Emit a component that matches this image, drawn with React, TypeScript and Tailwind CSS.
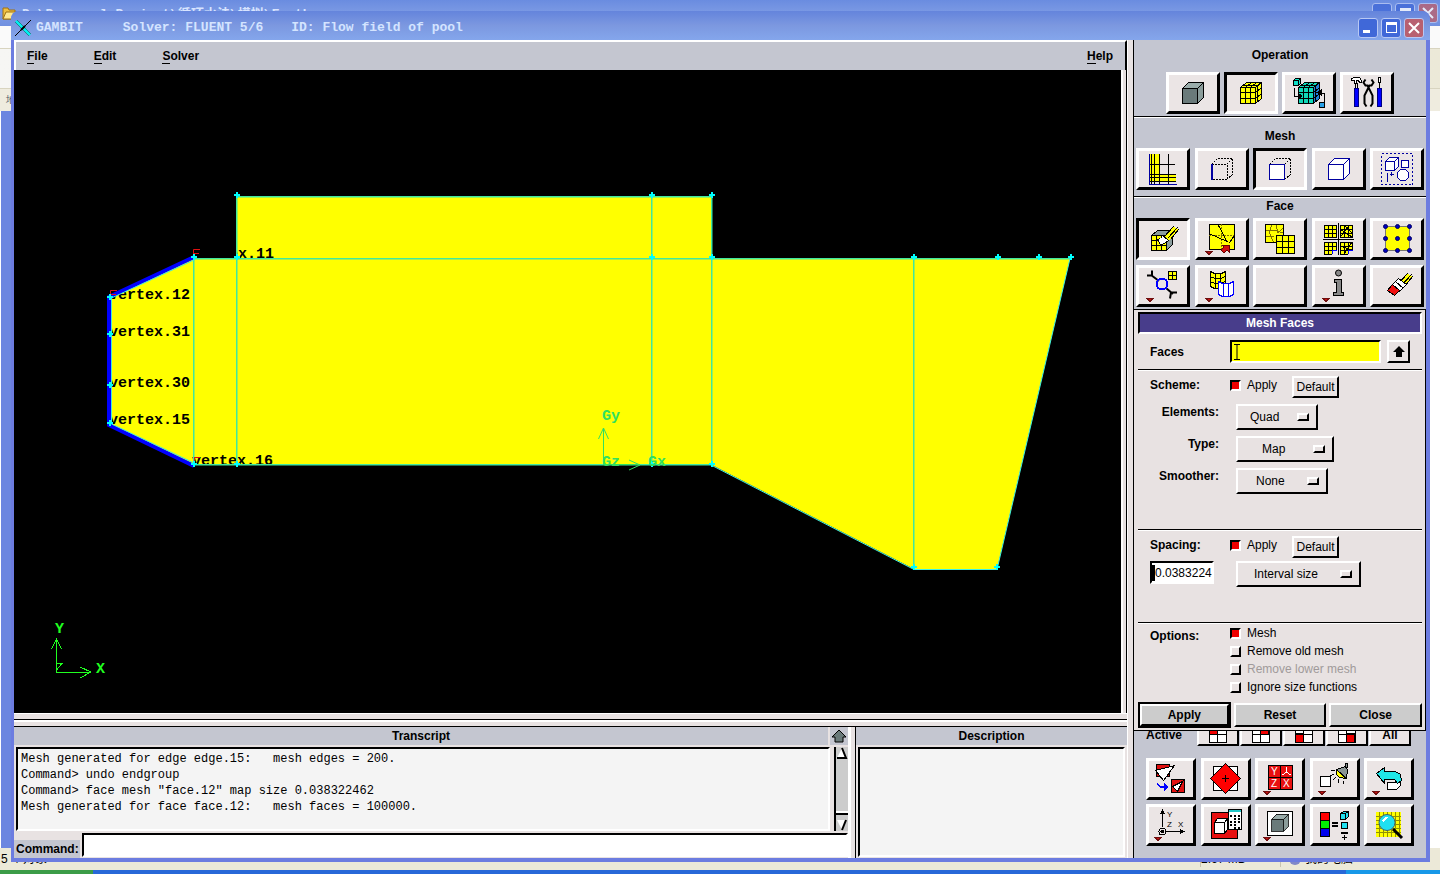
import { useState } from 'react';
import type { ReactNode } from 'react';
import clsx from 'clsx';

const raised = 'border-t-white border-l-white border-b-black border-r-black';
const sunken = 'border-t-black border-l-black border-b-white border-r-white';

// Icons are drawn on the inner face of a tool button, one unit per pixel
const Art = ({ children, small }: { children?: ReactNode; small?: boolean }) => (
  <svg
    viewBox={small ? '0 0 44 36' : '0 0 48 36'}
    className={clsx('h-9', small ? 'w-11' : 'w-12')}
    fill="none"
    stroke="#000"
    strokeWidth="1"
    shapeRendering="crispEdges"
    aria-hidden="true"
  >
    {children}
  </svg>
);

const More = ({ x = 8 }: { x?: number }) => (
  <path d={`M${x} 30.500h6l-3 3z`} fill="#d01010" stroke="#701010" />
);

const Grid = ({ x, y, s, n = 3 }: { x: number; y: number; s: number; n?: number }) => (
  <g>
    <rect x={x + 0.5} y={y + 0.5} width={s * n} height={s * n} fill="#ff0" />
    {Array.from({ length: n - 1 }, (_, i) => (
      <path
        key={i}
        d={`M${x + 0.5 + s * (i + 1)} ${y}v${s * n}M${x} ${y + 0.5 + s * (i + 1)}h${s * n}`}
      />
    ))}
  </g>
);

const GridCube = ({ front, side }: { front: string; side: string }) => (
  <g>
    <path d="M13.500 12.500l6-5h15l-6 5z" fill={front} />
    <path d="M28.500 12.500l6-5v16l-6 5z" fill={side} />
    <rect x="13.500" y="12.500" width="15" height="16" fill={front} />
    <path d="M18.500 12.500v16M23.500 12.500v16M13.500 17.500h15M13.500 23.500h15" />
    <path d="M18.500 12.500l6-5M23.500 12.500l6-5M15.500 10.500h15v16M28.500 17.500l6-5M28.500 23.500l6-5" />
  </g>
);

const SolidCube = ({ x = 13, y = 7 }: { x?: number; y?: number }) => (
  <g transform={`translate(${x - 13} ${y - 7})`}>
    <path d="M13.500 13.500l6-6h15l-6 6z" fill="#9aacaa" />
    <path d="M28.500 13.500l6-6v15l-6 6z" fill="#8a9c9a" />
    <rect x="13.500" y="13.500" width="15" height="15" fill="#6a7a7a" />
  </g>
);

const Pencil = () => (
  <g>
    <path d="M25.500 16.500l9-11 5 3-9 11z" fill="#ff0" stroke="none" />
    <path d="M24.500 16.500l10-11M28.500 17.500l10-11M31.500 18.500l8-10" />
  </g>
);

const operationTools = [
  { name: 'Geometry', art: <SolidCube /> },
  { name: 'Mesh', art: <GridCube front="#ff0" side="#ff0" /> },
  {
    name: 'Zones',
    art: (
      <>
        <GridCube front="#10d8b8" side="#2080d8" />
        <path d="M8.500 5.500l2-2h5v5l-2 2h-5zM8.500 5.500h5v5M13.500 5.500l2-2" fill="#10e0c8" />
        <path d="M9.500 13v8h4M39.500 27v-9h-5" />
        <path d="M13 18.500l4 2.500-4 2.500zM36 15l-4 2.500 4 2.500z" fill="#000" />
        <rect x="34.500" y="27.500" width="5" height="5" fill="#28a0e8" />
      </>
    )
  },
  {
    name: 'Tools',
    art: (
      <>
        <path d="M8.500 5.500v-2l3-1h5l2 3v2h-2l-1-2h-2v3h-2v-3z" fill="#fff" />
        <path d="M12.500 8v5M14.500 8v5M36.500 7v6M35.500 2.500h2v5h-2z" fill="#fff" />
        <path d="M11.500 13.500h4v18h-4zM34.500 13.500h4v18h-4z" fill="#00f" stroke="#000080" />
        <path
          d="M22.500 4.500l-2 3 2 3h2l5 10v8l-2 3M28.500 4.500l2 3-2 3h-2l-5 10v8l2 3"
          strokeWidth="2"
          shapeRendering="auto"
        />
      </>
    )
  }
];

const meshTools = [
  {
    name: 'Boundary layer',
    art: (
      <>
        <path d="M11 3h9v20h17v7H11z" fill="#ff0" stroke="none" />
        <path d="M12.500 3v30M15.500 3v30M20.500 3v30M29.500 3v30M10 13.500h26M10 23.500h27M10 26.500h27M10 30.500h27" />
        <path d="M10.500 3v30h27" stroke="#0000a0" />
      </>
    )
  },
  {
    name: 'Edge',
    art: (
      <>
        <path
          d="M14 13.500h15v15H14M13.500 13.500l6-6h15v16l-6 5M28.500 13.500l6-6"
          strokeDasharray="2 1"
        />
        <path d="M14 13v16" stroke="#0000a0" strokeWidth="2" />
      </>
    )
  },
  {
    name: 'Face',
    art: (
      <>
        <path d="M13.500 13.500l6-6h15v16l-6 5M28.500 13.500l6-6" strokeDasharray="2 1" />
        <rect x="13.500" y="13.500" width="15" height="15" fill="#fff" stroke="#0000a0" />
      </>
    )
  },
  {
    name: 'Volume',
    art: (
      <path
        d="M13.500 13.500l6-6h15v15l-6 6h-15zM13.500 13.500h15v15M28.500 13.500l6-6"
        fill="#fff"
        stroke="#0000a0"
      />
    )
  },
  {
    name: 'Group',
    art: (
      <g stroke="#0000a0">
        <rect x="8.500" y="2.500" width="31" height="31" strokeDasharray="2 2" />
        <path d="M12.500 10.500l4-4h9v9l-4 4h-9zM12.500 10.500h9v9M21.500 10.500l4-4" fill="#fff" />
        <rect x="28.500" y="9.500" width="7" height="7" fill="#fff" />
        <path d="M14.500 22v9M18.500 21v4M17 23.500h4" />
        <path d="M27.500 18.500h5l3 3v5l-3 3h-5l-3-3v-5z" fill="#fff" />
      </g>
    )
  }
];

const faceTools = [
  {
    name: 'Mesh faces',
    art: (
      <>
        <path d="M12.500 14.500l6-5h15v14l-6 6z" fill="#8a9c9c" />
        <Grid x={12} y={14} s={5} />
        <Pencil />
        <path d="M23.500 14.500l6 5-3 2-5 3-1-3-2-3 3-1z" fill="#fff" />
      </>
    )
  },
  {
    name: 'Move face nodes',
    art: (
      <>
        <rect x="11.500" y="3.500" width="25" height="25" fill="#ff0" />
        <path d="M11 14.500h25M23.500 3v25" stroke="#807000" strokeDasharray="2 1" />
        <path d="M11 12.500l18 8-9-17M36.500 14l-5 8" />
        <path d="M23 29l3-3-2-2h7v7l-2-2-3 3z" fill="#d01010" stroke="#600" />
        <More />
      </>
    )
  },
  {
    name: 'Split meshed face',
    art: (
      <>
        <rect x="9.500" y="3.500" width="18" height="18" fill="#ff0" />
        <path d="M15.500 4l-2 8 4 9M10 10l8-1 9 3M10 16l8-1M20 4l2 8 5-5" stroke="#807000" />
        <Grid x={20} y={14} s={6} />
      </>
    )
  },
  {
    name: 'Smooth faces',
    art: (
      <>
        <Grid x={9} y={4} s={4} />
        <Grid x={25} y={4} s={4} />
        <Grid x={9} y={21} s={4} />
        <Grid x={25} y={21} s={4} />
        <path d="M25 8l12 8M29 4l8 8M26 15l8-10M25 25l12 4M29 33l8-12" />
        <path d="M17 29h5v5h-5zM33 29h5v5h-5z" fill="#ebe5e5" stroke="none" />
        <path d="M17.500 33v-4h4M33.500 33v-4h4" stroke="#00f" />
        <path d="M23.500 2v32M8 18.500h31" />
      </>
    )
  },
  {
    name: 'Face element type',
    art: (
      <>
        <rect x="12.500" y="5.500" width="24" height="24" fill="#ff0" stroke="#777" />
        {[5, 17, 29].map(y =>
          [12, 24, 36].map(x => (
            <circle
              key={`${x}-${y}`}
              cx={x + 0.5}
              cy={y + 0.5}
              r="2"
              fill="#0000c0"
              stroke="#000060"
              shapeRendering="auto"
            />
          ))
        )}
      </>
    )
  },
  {
    name: 'Link face meshes',
    art: (
      <>
        <Grid x={29} y={3} s={4} n={2} />
        <path
          d="M8 7.500h5v-5M12 7l8 6M27 20l7 6M38 24.500h-6l-1 6"
          strokeWidth="2"
          shapeRendering="auto"
        />
        <circle cx="23" cy="16" r="5.500" stroke="#00f" strokeWidth="2" />
        <More />
      </>
    )
  },
  {
    name: 'Convert face mesh',
    art: (
      <>
        <path d="M12.500 3.500l4 2h7l4-2v15l-4 2h-7l-4-2z" fill="#ff0" />
        <path d="M17.500 5v16M22.500 5v16M12 8.500l5 2h6l4-2M12 13.500l5 2h6l4-2" />
        <path d="M20.500 13.500l4 2h7l4-2v13l-4 2h-7l-4-2z" fill="#fff" stroke="#00f" />
        <path d="M25.500 15v13M30.500 15v13" stroke="#00f" />
        <More />
      </>
    )
  },
  { name: 'Unused', art: null },
  {
    name: 'Summarize faces',
    art: (
      <>
        <circle cx="23.500" cy="5" r="3" fill="#888" shapeRendering="auto" />
        <path d="M19.500 11.500h7v13h2v3h-10v-3h3v-10h-2z" fill="#888" />
        <More />
      </>
    )
  },
  {
    name: 'Delete face mesh',
    art: (
      <>
        <Pencil />
        <path d="M19.500 16.500l6-6 8 6-7 7z" fill="#fff" />
        <path d="M14.500 22.500l5-6 7 6-5 5z" fill="#f01010" />
        <path d="M23 14l7 6" />
      </>
    )
  }
];

const label = { fill: '#fff', stroke: 'none', fontFamily: 'Liberation Sans, sans-serif', fontSize: 10 };

const globalTools = [
  {
    name: 'Fit to window',
    art: (
      <>
        <rect x="7.500" y="3.500" width="13" height="12" fill="#e01010" />
        <path d="M6.500 9.500l19-5-11 15z" fill="#fff" />
        <path d="M9 20v3l2 2h4v-3l5 4-5 4v-3h-4l-3-3z" fill="#00f" stroke="none" />
        <rect x="22.500" y="18.500" width="13" height="13" fill="#e01010" />
        <path d="M23.500 25.500l10-5-5 10z" fill="#fff" />
      </>
    )
  },
  {
    name: 'Select pivot',
    art: (
      <>
        <rect x="9.500" y="5.500" width="24" height="24" fill="#fff" />
        <path d="M21.500 2.500l15 15-15 15-15-15z" fill="#f00" />
        <path d="M18 17.500h7M21.500 14v7" />
      </>
    )
  },
  {
    name: 'Orient model',
    art: (
      <>
        <path d="M10.500 4.500h24v24h-24zM22.500 4v25M10 16.500h25" fill="#e81010" />
        <path d="M28.500 6v5l-4 3M28.500 11l4 3" stroke="#fff" />
        <text x="13" y="14" {...label}>Y</text>
        <text x="13" y="26" {...label}>Z</text>
        <text x="25" y="26" {...label}>X</text>
        <More x={6} />
      </>
    )
  },
  {
    name: 'Lighting',
    art: (
      <>
        <rect x="7.500" y="15.500" width="10" height="10" fill="#fff" />
        <path d="M32.500 2.500h2v4h-2zM32.500 5.500l-9 3 10 9 1-9z" fill="#8a9494" />
        <path d="M23.500 8.500l9 9-6-1-3-3z" fill="#ff0" />
        <path d="M18 9.500h4M17 14.500l4-1M20 19l3-3M25 22l1-4M30 23v-3" />
        <More x={6} />
      </>
    )
  },
  {
    name: 'Undo',
    art: (
      <>
        <path d="M20.500 21.500h7l6-3v6l-4 4h-9z" fill="#fff" />
        <path d="M9.500 12.500l8-6v4h11l5 3 1 6-4 3-3-4h-10v4z" fill="#20e8e8" />
        <More x={6} />
      </>
    )
  },
  {
    name: 'Coordinate system',
    art: (
      <>
        <path d="M13.500 3v17M17 24.500h18" />
        <path d="M11 7l2.500-5L16 7zM31 22l5 2.500-5 2.500z" fill="#000" stroke="none" />
        <circle cx="13.500" cy="24.500" r="3.500" />
        <circle cx="13.500" cy="24.500" r="1.500" fill="#000" />
        <text x="18" y="10" {...label} fill="#000" fontSize="8">Y</text>
        <text x="18" y="20" {...label} fill="#000" fontSize="8">Z</text>
        <text x="29" y="20" {...label} fill="#000" fontSize="8">X</text>
        <More x={6} />
      </>
    )
  },
  {
    name: 'Specify model display',
    art: (
      <>
        <rect x="7.500" y="5.500" width="26" height="26" fill="#e81010" />
        <path d="M10.500 15.500l3-4h10v11l-3 4h-10zM10.500 15.500h10v11M20.500 15.500l3-4" fill="#fff" />
        <rect x="24.500" y="2.500" width="13" height="20" fill="#fff" />
        <path d="M25 4h12" stroke="#20c8c8" strokeWidth="2" />
        <path
          d="M26 8.500h2m2 0h2m2 0h2M30 11.500h2m2 0h2M26 14.500h2m2 0h2m2 0h2M26 17.500h2m2 0h2M30 20.500h2m2 0h2"
          strokeWidth="2"
        />
      </>
    )
  },
  {
    name: 'Render model',
    art: (
      <>
        <rect x="9.500" y="4.500" width="25" height="24" fill="#fff" />
        <g transform="translate(2 3) scale(0.8)">
          <SolidCube y={5} x={14} />
        </g>
        <More x={6} />
      </>
    )
  },
  {
    name: 'Specify color mode',
    art: (
      <>
        <rect x="7.500" y="5.500" width="9" height="8" fill="#f00" />
        <rect x="7.500" y="13.500" width="9" height="8" fill="#0e0" />
        <rect x="7.500" y="21.500" width="9" height="8" fill="#00e" />
        <path d="M19 16h6M19 19h6M28 26h7" strokeWidth="2" />
        <path d="M29 30.500h5M31.500 28v5" />
        <path d="M27.500 6.500l3-2h5v5l-3 3h-5zM27.500 6.500h5v6M32.500 6.500l3-2" fill="#20e0f0" />
        <rect x="28.500" y="15.500" width="6" height="6" fill="#20e0f0" />
      </>
    )
  },
  {
    name: 'Examine mesh',
    art: (
      <>
        <rect x="9" y="5" width="25" height="25" fill="#ff0" stroke="none" />
        <path
          d="M9 9.500h25M9 13.500h25M9 17.500h25M9 21.500h25M9 25.500h25M12.500 5v25M16.500 5v25M20.500 5v25M24.500 5v25M28.500 5v25M32.500 5v25"
          stroke="#909000"
        />
        <path d="M26 22l9 9" strokeWidth="3" shapeRendering="auto" />
        <circle cx="20" cy="15.500" r="8" fill="#20e0f0" stroke="#406068" shapeRendering="auto" />
        <path d="M15 14l3-4h3l-4 5z" fill="#fff" stroke="none" />
      </>
    )
  }
];

type Tool = { name: string; art: ReactNode };

function ToolButton({ tool, active, small }: { tool: Tool; active?: boolean; small?: boolean }) {
  return (
    <button
      type="button"
      aria-label={tool.name}
      aria-pressed={active}
      className={clsx('border-3 bg-[#ebe5e5]', active ? sunken : raised)}
    >
      <Art small={small}>{tool.art}</Art>
    </button>
  );
}

const Rule = () => <div className="h-[2px] border-t border-b border-t-black border-b-white" />;

function Dropdown({ name, value, className }: { name: string; value: string; className: string }) {
  return (
    <div className="relative">
      <select
        id={name}
        aria-label={name}
        defaultValue={value}
        className={clsx('block h-[26px] appearance-none border-2 bg-[#e8e2e2]', raised, className)}
      >
        <option>{value}</option>
      </select>
      <span
        className={clsx(
          'pointer-events-none absolute top-[9px] right-[9px] h-2 w-3 border-2 bg-[#e8e2e2]',
          raised
        )}
      />
    </div>
  );
}

function Check({ text, checked, disabled }: { text: string; checked?: boolean; disabled?: boolean }) {
  return (
    <label className={clsx('flex h-[18px] items-center gap-[6px]', disabled && 'text-[#a09a9a]')}>
      <input
        type="checkbox"
        defaultChecked={checked}
        disabled={disabled}
        className="size-[11px] appearance-none border-2 border-t-white border-l-white border-b-black border-r-black checked:border-t-black checked:border-l-black checked:border-b-white checked:border-r-white checked:bg-[#f00000]"
      />
      {text}
    </label>
  );
}

const DefaultButton = () => (
  <button type="button" className={clsx('ml-[15px] h-[22px] w-[47px] border-2', raised)}>
    Default
  </button>
);

const vertices = [
  [237, 195], [652, 195], [712, 195], [194, 257], [237, 257], [652, 257], [712, 257], [914, 257],
  [998, 257], [1039, 257], [1071, 257], [110, 297], [110, 334], [110, 385], [110, 423], [194, 464],
  [237, 464], [652, 464], [712, 464], [914, 567], [997, 567]
];

const vertexLabels = [
  { x: 193, y: 258, text: 'vertex.11' },
  { x: 109, y: 299, text: 'vertex.12' },
  { x: 109, y: 336, text: 'vertex.31' },
  { x: 109, y: 387, text: 'vertex.30' },
  { x: 109, y: 424, text: 'vertex.15' },
  { x: 192, y: 465, text: 'vertex.16' }
];

function Viewport() {
  return (
    <svg
      viewBox="14 70 1107 643"
      preserveAspectRatio="xMinYMin meet"
      className="h-full w-full bg-black"
      fontFamily="Liberation Mono, monospace"
      fontSize="15"
      fontWeight="bold"
      fill="none"
    >
      <path
        d="M236.500 196.500H711.500V258.500H1070L997 569H914L712 465H194L110 425V297L194 258.500H236.500Z"
        fill="#ff0"
      />
      <g fill="#000">
        {vertexLabels.map(v => (
          <text key={v.text} x={v.x} y={v.y}>
            {v.text}
          </text>
        ))}
      </g>
      <g fill="#40e8a0">
        <path d="M236 196h1.500v269H236zM651 196h1.500v269H651zM711 196h1.500v269H711zM193 258h1.500v207H193zM913 258h1.500v311H913z" />
        <path d="M236 196h476v1.500H236zM194 258h876v1.500H194zM194 464h518v1.500H194z" />
      </g>
      <path d="M1070 258.500L997 569.500H914L712 465.500" stroke="#40f0e0" />
      <path d="M194 257L109 297V425L194 466" stroke="#00f" strokeWidth="4" />
      <path d="M194 260L111.500 298V424L194 463" stroke="#40e8e0" />
      <path
        d="M200 249.500H193.500V256M194 253.500h5M117 290.500H110.500V297M111 294.500h5M200 457.500H194.500V463"
        stroke="#e01010"
      />
      <path
        d={vertices.map(([x, y]) => `M${x - 3} ${y}h6M${x} ${y - 3}v6`).join('')}
        stroke="#00ffff"
        strokeWidth="2"
      />
      <g stroke="#30e060">
        <path d="M603.500 465V428.500M598.500 439l5-11 5 11M603 464.500H640M629 460l11 5-11 5" />
      </g>
      <g stroke="#20ff20" shapeRendering="crispEdges">
        <path d="M56.500 672V640M51.500 649l5-10 5 10M56 672.500H91M80 667l11 5-11 6M57 663.500h5l-5 6" />
      </g>
      <g fill="#30e060">
        <text x="602" y="420">Gy</text>
        <text x="602" y="466">Gz</text>
        <text x="648" y="466">Gx</text>
      </g>
      <g fill="#20ff20">
        <text x="55" y="633">Y</text>
        <text x="96" y="673">X</text>
      </g>
    </svg>
  );
}

function CaptionButtons({ dim }: { dim?: boolean }) {
  const base = 'flex size-5 items-center justify-center rounded-[3px] border border-[#b8c8f4]';
  return (
    <div className={clsx('flex gap-[3px]', dim && 'opacity-80')}>
      <button type="button" aria-label="Minimize" className={clsx(base, 'bg-[#4068d8]')}>
        <span className="mt-2 mr-1 h-[3px] w-[7px] bg-white" />
      </button>
      <button type="button" aria-label="Maximize" className={clsx(base, 'bg-[#4068d8]')}>
        <span className="h-[11px] w-[11px] border border-t-3 border-white" />
      </button>
      <button type="button" aria-label="Close" className={clsx(base, 'bg-[#b86070]')}>
        <svg viewBox="0 0 12 12" className="size-3" stroke="#fff" strokeWidth="2">
          <path d="M1 1l10 10M11 1L1 11" />
        </svg>
      </button>
    </div>
  );
}

// Explorer window that lies behind the main one
function ExplorerWindow() {
  return (
    <div className="flex h-full flex-col bg-white text-xs text-black">
      <div className="flex h-[26px] shrink-0 items-center bg-linear-to-b from-[#6a8ce0] via-[#7c9ae4] to-[#7090e0] pr-[2px] pl-[2px]">
        <svg viewBox="0 0 16 16" className="size-4 shrink-0" aria-hidden="true">
          <path d="M1 3h5l1 2h6v9H1z" fill="#f0c040" stroke="#a07010" />
          <path d="M4 7h11l-3 7H1z" fill="#ffe890" stroke="#a07010" />
        </svg>
        <span className="ml-1 flex-1 pt-1 font-['Liberation_Mono','Noto_Sans_CJK_SC',monospace] text-[13px] font-bold text-[#d8e4ff]">
          D:\Personal Project\循环水法\模拟\Earth
        </span>
        <CaptionButtons dim />
      </div>
      <div className="h-[22px] shrink-0 bg-[#fafafa]" />
      <div className="h-10 shrink-0 border-t border-[#d8d4c0] bg-linear-to-r from-[#f6f6f4] to-[#ece9d8]" />
      <div className="flex h-[23px] shrink-0 items-center border-t border-[#d8d4c0] bg-[#efecdf] pl-[6px] text-[10px] text-gray-600">
        地址
      </div>
      <div className="flex flex-1 justify-between">
        <div className="w-4 border-l border-white bg-[#6c86e0]" />
        <div className="w-4 bg-white" />
      </div>
      <div className="flex h-[22px] shrink-0 items-center bg-[#ece9d8] font-['Liberation_Sans','Noto_Sans_CJK_SC',sans-serif]">
        <span className="flex-1 pl-[1px]">5 个对象</span>
        <span className="w-20 border-l border-[#c8c4b0]">2.67 MB</span>
        <span className="flex w-40 items-center gap-1 border-l border-[#c8c4b0] pl-2">
          <span className="size-3 rounded-full bg-[#8088c8]" />
          我的电脑
        </span>
      </div>
      <div className="flex h-1 shrink-0 bg-[#2868d8]">
        <div className="w-[93px] bg-[#3c9c48]" />
        <div className="flex-1" />
        <div className="w-[94px] bg-[#1898e8]" />
      </div>
    </div>
  );
}

const menus = ['File', 'Edit', 'Solver'];

function MenuItem({ text }: { text: string }) {
  return (
    <button type="button" className="text-left leading-4">
      <span className="border-b border-black">{text[0]}</span>
      {text.slice(1)}
    </button>
  );
}

const transcript = [
  'Mesh generated for edge edge.15:   mesh edges = 200.',
  'Command> undo endgroup',
  'Command> face mesh "face.12" map size 0.038322462',
  'Mesh generated for face face.12:   mesh faces = 100000.'
];

function BottomPanels() {
  const [command, setCommand] = useState('');

  return (
    <div className="flex h-[131px] shrink-0">
      <section className="flex min-w-0 flex-1 flex-col bg-[#e8e2e2]">
        <div className="flex h-[18px] shrink-0 bg-[#c4c6d0]">
          <h2 className="flex-1 text-center leading-[18px] font-bold">Transcript</h2>
          <button
            type="button"
            aria-label="Expand transcript"
            className="flex w-5 items-center justify-center border-l-2 border-[#e8e2e2]"
          >
            <svg viewBox="0 0 16 14" className="h-[14px] w-4" fill="#6a7a7a" stroke="#000">
              <path d="M8 1l7 7h-3v5H4V8H1z" />
            </svg>
          </button>
        </div>
        <div className="flex min-h-0 flex-1 gap-1 py-[2px] pl-[2px]">
          <div
            className={clsx(
              'min-w-0 flex-1 border-2 bg-[#f4f4f4] px-[3px] pt-[2px] font-["Liberation_Mono",monospace] text-xs leading-4 whitespace-pre',
              sunken
            )}
          >
            {transcript.map(line => (
              <div key={line}>{line}</div>
            ))}
          </div>
          <div className="flex w-[14px] flex-col justify-between border-l-2 border-black bg-[#ccc]">
            <svg viewBox="0 0 12 12" className="size-3">
              <path d="M1 11L6 1l4 10z" fill="#fff" />
              <path d="M6 1l4 10H1" fill="none" stroke="#000" strokeWidth="2" />
            </svg>
            <div>
              <div className="mb-1 h-1 border-b-2 border-black bg-white" />
              <svg viewBox="0 0 12 12" className="size-3">
                <path d="M1 1h9L6 11z" fill="#fff" />
                <path d="M10 1L6 11" fill="none" stroke="#000" strokeWidth="2" />
              </svg>
            </div>
          </div>
        </div>
        <div className="flex h-[25px] shrink-0 items-end gap-[2px]">
          <label htmlFor="command" className="h-[18px] w-[66px] bg-[#c4c6d0] pl-[2px] leading-[18px] font-bold">
            Command:
          </label>
          <input
            id="command"
            value={command}
            onChange={e => setCommand(e.target.value)}
            className={clsx(
              'mb-[1px] h-6 min-w-0 flex-1 border-2 bg-white px-1 font-["Liberation_Mono",monospace]',
              sunken
            )}
          />
        </div>
      </section>
      <div className="w-2 border-r border-l-3 border-r-black border-l-white bg-[#e8e2e2]" />
      <section className="flex w-[271px] flex-col bg-[#e8e2e2]">
        <h2 className="h-[18px] bg-[#c4c6d0] text-center leading-[18px] font-bold">Description</h2>
        <div className={clsx('m-[2px] mb-[1px] flex-1 border-2 bg-[#f4f4f4]', sunken)} />
      </section>
    </div>
  );
}

function MeshFacesForm() {
  return (
    <form
      onSubmit={e => e.preventDefault()}
      className="border border-l-0 border-black bg-[#e8e2e2] pt-[2px] pr-[3px] pb-[2px] pl-1"
    >
      <h2
        className={clsx(
          'h-[22px] border-2 bg-[#483d8b] text-center leading-[18px] font-bold text-white',
          sunken
        )}
      >
        Mesh Faces
      </h2>
      <div className="flex h-[35px] items-center pl-3">
        <label htmlFor="faces" className="w-20 font-bold">
          Faces
        </label>
        <div className={clsx('flex h-[23px] w-[151px] items-center border-2 bg-[#ff0]', sunken)}>
          <svg viewBox="0 0 6 16" className="ml-[2px] h-4 w-[6px]" stroke="#000" fill="none">
            <path d="M0 .5h6M0 15.500h6M3 0v16" />
          </svg>
          <input id="faces" className="h-full min-w-0 flex-1 outline-none" />
        </div>
        <button
          type="button"
          aria-label="Pick faces"
          className={clsx('ml-[6px] flex size-[23px] items-center justify-center border-2', raised)}
        >
          <svg viewBox="0 0 12 12" className="size-3">
            <path d="M6 0l6 6H9v5H3V6H0z" />
          </svg>
        </button>
      </div>
      <Rule />
      <div className="h-[158px] pt-[5px]">
        <div className="flex h-[22px] pl-3">
          <span className="w-20 leading-[18px] font-bold">Scheme:</span>
          <Check text="Apply" checked />
          <DefaultButton />
        </div>
        <div className="mt-[6px] grid grid-cols-[81px_auto] justify-items-start gap-x-[17px] gap-y-[6px]">
          <label htmlFor="Elements" className="justify-self-end leading-4 font-bold">
            Elements:
          </label>
          <Dropdown name="Elements" value="Quad" className="w-[82px] pl-3" />
          <label htmlFor="Type" className="justify-self-end leading-4 font-bold">
            Type:
          </label>
          <Dropdown name="Type" value="Map" className="w-[98px] pl-6" />
          <label htmlFor="Smoother" className="justify-self-end leading-4 font-bold">
            Smoother:
          </label>
          <Dropdown name="Smoother" value="None" className="w-[92px] pl-[18px]" />
        </div>
      </div>
      <Rule />
      <div className="h-[91px] pt-[5px] pl-3">
        <div className="flex h-[22px]">
          <span className="w-20 leading-[18px] font-bold">Spacing:</span>
          <Check text="Apply" checked />
          <DefaultButton />
        </div>
        <div className="mt-[3px] flex items-start gap-[22px]">
          <div className={clsx('flex h-[23px] w-16 items-center border-2 bg-white', sunken)}>
            <span className="h-4 w-[3px] shrink-0 bg-black" />
            <input
              aria-label="Interval size value"
              defaultValue="0.0383224"
              className="min-w-0 flex-1 outline-none"
            />
          </div>
          <Dropdown name="Interval" value="Interval size" className="w-[125px] pl-4" />
        </div>
      </div>
      <Rule />
      <div className="flex h-[78px] pl-3">
        <span className="w-20 pt-[2px] leading-5 font-bold">Options:</span>
        <div>
          <Check text="Mesh" checked />
          <Check text="Remove old mesh" />
          <Check text="Remove lower mesh" disabled />
          <Check text="Ignore size functions" />
        </div>
      </div>
      <div className="flex h-[26px] gap-[3px] font-bold">
        <button type="submit" className="flex-1 border-2 border-black bg-[#ccc]">
          <span className={clsx('block h-full border-2 leading-[18px]', raised)}>Apply</span>
        </button>
        <button type="reset" className={clsx('my-[1px] flex-1 border-2 bg-[#ccc]', raised)}>
          Reset
        </button>
        <button type="button" className={clsx('my-[1px] flex-1 border-2 bg-[#ccc]', raised)}>
          Close
        </button>
      </div>
    </form>
  );
}

const quadrants = [
  { name: 'Upper left', x: 0, y: 0 },
  { name: 'Upper right', x: 8, y: 0 },
  { name: 'Lower left', x: 0, y: 8 },
  { name: 'Lower right', x: 8, y: 8 }
];

function ControlPanel() {
  return (
    <aside className="flex w-[292px] shrink-0 flex-col bg-[#c4c6d1]">
      <section className="pt-[7px] pb-[2px]">
        <h2 className="text-center leading-4 font-bold">Operation</h2>
        <div className="mt-[9px] flex justify-center gap-1">
          {operationTools.map((tool, i) => (
            <ToolButton key={tool.name} tool={tool} active={i === 1} />
          ))}
        </div>
      </section>
      <Rule />
      <section className="px-[2px] pt-[10px] pb-[6px]">
        <h2 className="text-center leading-4 font-bold">Mesh</h2>
        <div className="mt-1 flex justify-between">
          {meshTools.map((tool, i) => (
            <ToolButton key={tool.name} tool={tool} active={i === 2} />
          ))}
        </div>
      </section>
      <Rule />
      <section className="px-[2px] pb-[2px]">
        <h2 className="text-center leading-4 font-bold">Face</h2>
        <div className="mt-1 grid grid-cols-[repeat(5,54px)] justify-between gap-y-[5px]">
          {faceTools.map((tool, i) => (
            <ToolButton key={tool.name} tool={tool} active={i === 0} />
          ))}
        </div>
      </section>
      <MeshFacesForm />
      <section className="flex h-[15px] items-end overflow-hidden pl-3 font-bold">
        <span className="w-[51px] leading-[22px]">Active</span>
        {quadrants.map(q => (
          <button
            key={q.name}
            type="button"
            aria-label={q.name}
            className={clsx('mr-[1px] flex h-6 w-[42px] justify-center border-2 bg-[#ebe5e5]', raised)}
          >
            <svg viewBox="0 0 18 18" className="mt-[1px] size-[18px]" stroke="#000" fill="#fff">
              <rect x=".5" y=".5" width="17" height="17" />
              <rect x={q.x + 0.5} y={q.y + 0.5} width="8" height="9" fill="#f00000" />
              <path d="M8.500 0v18M0 9.500h18" />
            </svg>
          </button>
        ))}
        <button
          type="button"
          className={clsx('h-6 w-[42px] border-2 bg-[#ebe5e5] pt-[2px] leading-[18px]', raised)}
        >
          All
        </button>
      </section>
      <section className="mt-3 grid grid-cols-[repeat(5,50px)] justify-between gap-y-1 px-3">
        {globalTools.map(tool => (
          <ToolButton key={tool.name} tool={tool} small />
        ))}
      </section>
    </aside>
  );
}

export default function App() {
  return (
    <div className="relative h-screen min-h-[860px] min-w-[900px] overflow-hidden font-['Liberation_Sans',sans-serif] text-xs">
      <ExplorerWindow />
      <div className="absolute top-[11px] right-[10px] bottom-3 left-[11px] flex flex-col rounded-t-lg bg-[#6c7ce0] pr-1 pb-1 pl-[3px]">
        <header className="-mr-1 -ml-[3px] flex h-[29px] shrink-0 items-center rounded-t-lg bg-linear-to-b from-[#6484dc] via-[#7c98e0] to-[#84a6ec] pt-1 pr-[6px] pl-1">
          <svg viewBox="0 0 16 16" className="size-4">
            <path d="M16 0L0 16" stroke="#000" />
            <path d="M1 1l14 14" stroke="#00f0f0" strokeWidth="3" />
            <path d="M0 2l14 14M2 0l14 14" stroke="#104040" strokeWidth=".5" />
            <path d="M10 6L6 10" stroke="#000" strokeWidth="2" />
          </svg>
          <h1 className="ml-[5px] flex flex-1 font-['Liberation_Mono',monospace] text-[13px] font-bold whitespace-pre text-[#d4e4ff]">
            <span className="mr-10">GAMBIT</span>
            <span className="mr-7">Solver: FLUENT 5/6</span>
            <span>ID: Flow field of pool</span>
          </h1>
          <CaptionButtons />
        </header>
        <div className="flex min-h-0 flex-1">
          <main className="flex min-w-0 flex-1 flex-col">
            <nav className="flex h-[30px] shrink-0 items-center border-t-2 border-r-2 border-l-2 border-t-white border-r-black border-l-white bg-[#c4c6d0] pr-3 pl-[11px] font-bold">
              <div className="flex flex-1 gap-[46px]">
                {menus.map(menu => (
                  <MenuItem key={menu} text={menu} />
                ))}
              </div>
              <MenuItem text="Help" />
            </nav>
            <div className="flex min-h-0 flex-1">
              <div className="min-w-0 flex-1 bg-black">
                <Viewport />
              </div>
              <div className="w-[6px] border-r border-l-2 border-r-black border-l-white bg-[#e8e2e2]" />
            </div>
            <div className="flex h-[14px] shrink-0 flex-col">
              <div className="flex-1 border-t border-b border-t-white border-b-black bg-[#e8e2e2]" />
              <div className="flex-1 border-t-2 border-b border-t-white border-b-black bg-[#e8e2e2]" />
            </div>
            <BottomPanels />
          </main>
          <div className="w-[7px] shrink-0 border-r border-l border-r-black border-l-white bg-[#e8e2e2]" />
          <ControlPanel />
        </div>
      </div>
    </div>
  );
}
